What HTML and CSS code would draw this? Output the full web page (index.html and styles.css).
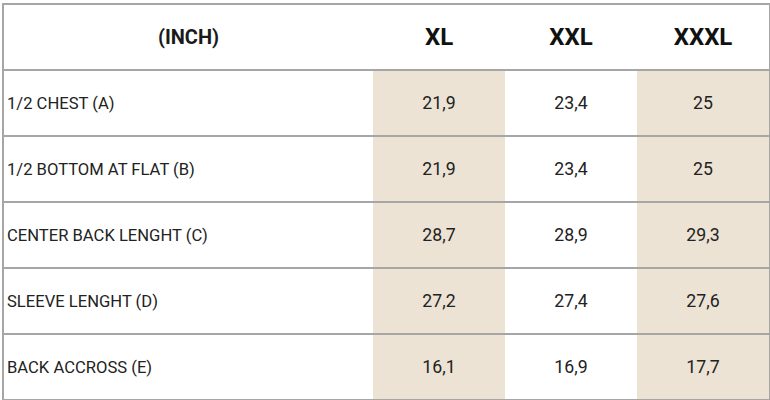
FILE: index.html
```html
<!DOCTYPE html>
<html>
<head>
<meta charset="utf-8">
<link rel="stylesheet" href="styles.css">
</head>
<body>
<table class="size-table">
  <thead>
    <tr>
      <th class="label-head">(INCH)</th>
      <th class="size-head">XL</th>
      <th class="size-head">XXL</th>
      <th class="size-head">XXXL</th>
    </tr>
  </thead>
  <tbody>
    <tr><td class="label">1/2 CHEST (A)</td><td class="val shade">21,9</td><td class="val">23,4</td><td class="val shade">25</td></tr>
    <tr><td class="label">1/2 BOTTOM AT FLAT (B)</td><td class="val shade">21,9</td><td class="val">23,4</td><td class="val shade">25</td></tr>
    <tr><td class="label">CENTER BACK LENGHT (C)</td><td class="val shade">28,7</td><td class="val">28,9</td><td class="val shade">29,3</td></tr>
    <tr><td class="label">SLEEVE LENGHT (D)</td><td class="val shade">27,2</td><td class="val">27,4</td><td class="val shade">27,6</td></tr>
    <tr><td class="label">BACK ACCROSS (E)</td><td class="val shade">16,1</td><td class="val">16,9</td><td class="val shade">17,7</td></tr>
  </tbody>
</table>
</body>
</html>
```
FILE: styles.css
```css
html, body {
  margin: 0;
  padding: 0;
  background: #ffffff;
}
body {
  padding: 3px 0 0 2px;
  font-family: Roboto, "Liberation Sans", sans-serif;
  color: #1a1a1a;
}
.size-table {
  border-collapse: collapse;
  width: 767px;
  table-layout: fixed;
  border: 2px solid #a6a6a6;
}
.size-table tr {
  height: 66px;
}
.size-table th,
.size-table td {
  border-top: 2px solid #a6a6a6;
  border-bottom: 2px solid #a6a6a6;
  padding: 0;
  vertical-align: middle;
}
.label-head {
  width: 369px;
  font-size: 20px;
  font-weight: 700;
  text-align: center;
  color: #1a1a1a;
}
.size-head {
  width: 132px;
  font-size: 24px;
  font-weight: 700;
  text-align: center;
  color: #111;
}
.label {
  font-size: 16.6px;
  padding-left: 3px !important;
  text-align: left;
  color: #222;
}
.val {
  font-size: 17.7px;
  text-align: center;
  color: #222;
}
td.shade {
  background: #ece3d4;
}
```
